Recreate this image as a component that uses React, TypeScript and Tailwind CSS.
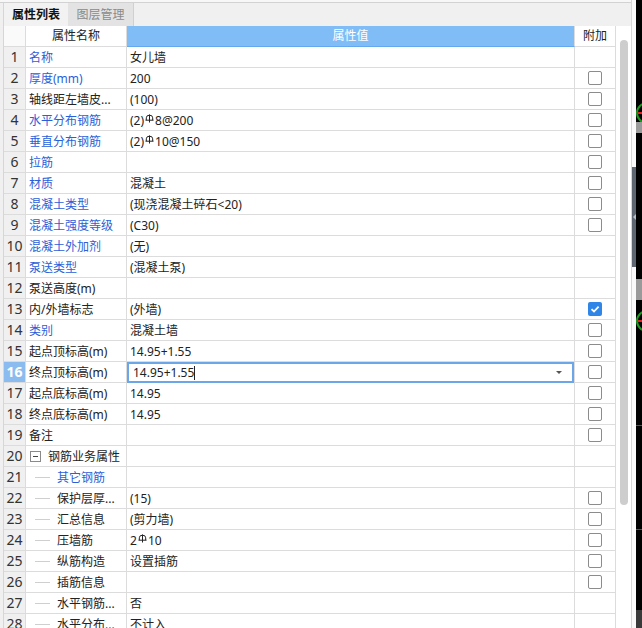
import React from "react";

type Check = "none" | "off" | "on";

type Row = {
  name: string;
  value?: React.ReactNode;
  blue?: boolean;
  check: Check;
  tree?: "group" | "child";
  editing?: boolean;
};

// HRB400 rebar mark, drawn as a small raised glyph
function Rebar() {
  return (
    <svg
      width="9"
      height="9"
      viewBox="0 0 9 9"
      className="inline-block relative -top-[3px] mx-px"
      fill="none"
      stroke="#222"
      strokeWidth="1"
    >
      <path d="M4.5 0.5V8.5" />
      <path d="M1.3 6.2V3.8Q1.3 1.2 4.5 1.2Q7.7 1.2 7.7 3.8V6.2" />
      <path d="M0.5 6.2H8.5" />
    </svg>
  );
}

const rows: Row[] = [
  { name: "名称", blue: true, value: "女儿墙", check: "none" },
  { name: "厚度(mm)", blue: true, value: "200", check: "off" },
  { name: "轴线距左墙皮...", value: "(100)", check: "off" },
  { name: "水平分布钢筋", blue: true, value: <>(2)<Rebar />8@200</>, check: "off" },
  { name: "垂直分布钢筋", blue: true, value: <>(2)<Rebar />10@150</>, check: "off" },
  { name: "拉筋", blue: true, check: "off" },
  { name: "材质", blue: true, value: "混凝土", check: "off" },
  { name: "混凝土类型", blue: true, value: "(现浇混凝土碎石<20)", check: "off" },
  { name: "混凝土强度等级", blue: true, value: "(C30)", check: "off" },
  { name: "混凝土外加剂", blue: true, value: "(无)", check: "none" },
  { name: "泵送类型", blue: true, value: "(混凝土泵)", check: "none" },
  { name: "泵送高度(m)", check: "none" },
  { name: "内/外墙标志", value: "(外墙)", check: "on" },
  { name: "类别", blue: true, value: "混凝土墙", check: "off" },
  { name: "起点顶标高(m)", value: "14.95+1.55", check: "off" },
  { name: "终点顶标高(m)", value: "14.95+1.55", check: "off", editing: true },
  { name: "起点底标高(m)", value: "14.95", check: "off" },
  { name: "终点底标高(m)", value: "14.95", check: "off" },
  { name: "备注", check: "off" },
  { name: "钢筋业务属性", check: "none", tree: "group" },
  { name: "其它钢筋", blue: true, check: "none", tree: "child" },
  { name: "保护层厚...", value: "(15)", check: "off", tree: "child" },
  { name: "汇总信息", value: "(剪力墙)", check: "off", tree: "child" },
  { name: "压墙筋", value: <>2<Rebar />10</>, check: "off", tree: "child" },
  { name: "纵筋构造", value: "设置插筋", check: "off", tree: "child" },
  { name: "插筋信息", check: "off", tree: "child" },
  { name: "水平钢筋...", value: "否", check: "none", tree: "child" },
  { name: "水平分布...", value: "不计入", check: "none", tree: "child" },
];

function CheckBox({ state }: { state: Check }) {
  if (state === "none") return null;
  if (state === "on")
    return (
      <span className="w-[14px] h-[14px] rounded-[2px] bg-[#2f86e6] flex items-center justify-center">
        <svg width="10" height="10" viewBox="0 0 10 10" fill="none" stroke="#fff" strokeWidth="1.8">
          <path d="M1.5 5.2L4 7.5L8.6 2.6" />
        </svg>
      </span>
    );
  return <span className="w-[14px] h-[14px] rounded-[2px] border border-[#8c8c8c] bg-white" />;
}

function NameCell({ row }: { row: Row }) {
  const color = row.blue ? "text-[#2b5fd8]" : "text-[#222]";
  if (row.tree === "group")
    return (
      <div className="flex items-center pl-[4px]">
        <span className="w-[11px] h-[11px] border border-[#8a8a8a] bg-white flex items-center justify-center">
          <span className="w-[5px] h-px bg-[#444]" />
        </span>
        <span className="ml-[7px] text-[#222]">{row.name}</span>
      </div>
    );
  if (row.tree === "child")
    return (
      <div className="flex items-center pl-[9px]">
        <span className="w-[15px] h-px bg-[#cfcfcf]" />
        <span className={`ml-[7px] ${color}`}>{row.name}</span>
      </div>
    );
  return <span className={`pl-[3px] ${color}`}>{row.name}</span>;
}

function ValueCell({ row }: { row: Row }) {
  if (row.editing)
    return (
      <div className="h-full w-full border-2 border-[#6aa6e8] bg-white flex items-center pl-[4px] pr-[10px]">
        <span className="text-[#222]">{row.value}</span>
        <span className="w-px h-[14px] bg-[#222]" />
        <span className="ml-auto w-0 h-0 border-l-[3px] border-r-[3px] border-t-[3px] border-l-transparent border-r-transparent border-t-[#555]" />
      </div>
    );
  return <span className="pl-[3px] text-[#222] whitespace-nowrap">{row.value}</span>;
}

export default function App() {
  return (
    <div
      className="w-[642px] h-[628px] flex overflow-hidden bg-[#f0f0f0] text-[12px] leading-none"
      style={{ fontFamily: '"Noto Sans", "Noto Sans CJK SC", sans-serif' }}
    >
      {/* property panel */}
      <div className="w-[632px] flex flex-col border-r border-[#d6d6d6]">
        <div className="h-[26px] flex flex-col shrink-0">
          <div className="h-[2px] bg-[#f7f7f7]" />
          <div className="h-px bg-[#d2d2d2]" />
          <div className="flex-1 flex pl-[3px]">
            <div className="w-[65px] border-l border-[#d6d6d6] bg-[#f2f2f2] flex items-center justify-center font-bold text-[#111]">
              属性列表
            </div>
            <div className="w-[66px] border-r border-[#d0d0d0] bg-[#e3e3e3] flex items-center justify-center text-[#8a8a8a]">
              图层管理
            </div>
          </div>
        </div>

        <div className="flex-1 flex min-h-0 bg-white">
          <div className="pl-[3px] bg-[#f0f0f0] flex">
            <div className="border-l border-[#d6d6d6] flex flex-col">
              {/* header */}
              <div className="h-[21px] flex shrink-0">
                <div className="w-[22px] border-r border-b border-[#dcdcdc] bg-[#fafafa]" />
                <div className="w-[101px] border-r border-b border-[#dcdcdc] bg-white flex items-center justify-center text-[#222]">
                  属性名称
                </div>
                <div className="w-[448px] border-r border-b border-[#dcdcdc] border-b-[#64a8f0] bg-[#80bcf6] flex items-center justify-center text-white">
                  属性值
                </div>
                <div className="w-[41px] border-r border-b border-[#dcdcdc] bg-white flex items-center justify-center text-[#222]">
                  附加
                </div>
              </div>

              {rows.map((row, i) => (
                <div key={i} className="h-[21px] flex shrink-0">
                  <div
                    className={`w-[22px] border-r border-b border-[#dcdcdc] flex items-center justify-center text-[14px] ${
                      row.editing ? "bg-[#8bbcf0] text-white font-bold" : "bg-[#f0f0f0] text-[#333]"
                    }`}
                  >
                    {i + 1}
                  </div>
                  <div className="w-[101px] border-r border-b border-[#dcdcdc] bg-white flex items-center whitespace-nowrap overflow-hidden pt-px">
                    <NameCell row={row} />
                  </div>
                  <div
                    className={`w-[448px] border-r border-[#dcdcdc] bg-white flex items-center ${
                      row.editing ? "" : "border-b pt-px"
                    }`}
                  >
                    <ValueCell row={row} />
                  </div>
                  <div className="w-[41px] border-r border-b border-[#dcdcdc] bg-white flex items-center justify-center">
                    <CheckBox state={row.check} />
                  </div>
                </div>
              ))}
            </div>
          </div>

          {/* vertical scroll bar */}
          <div className="w-[15px] bg-white pt-[14px] pl-[4px]">
            <div className="w-[8px] h-[465px] rounded-full bg-[#cdcdcd]" />
          </div>
        </div>
      </div>

      {/* splitter */}
      <div className="w-[4px] flex flex-col bg-[#fafafa]">
        <div className="h-[167px]" />
        <div className="h-[100px] bg-[#5d6671] flex items-center justify-center">
          <svg width="3" height="6" viewBox="0 0 3 6">
            <path d="M3 0L0 3L3 6Z" fill="#b8bec6" />
          </svg>
        </div>
      </div>

      {/* drawing canvas edge */}
      <div className="w-[6px] bg-black relative overflow-hidden">
        <div className="absolute left-0 top-[102px] w-[22px] h-[22px] rounded-full border-2 border-[#1c9a1c]" />
        <div className="absolute left-[1px] top-[112px] w-[6px] h-[2px] bg-[#e02020]" />
        <div className="absolute left-0 top-[122px] w-full h-[11px] bg-[#9a9a9a]" />
        <div className="absolute left-0 top-[279px] w-full h-[21px] bg-[#9a9a9a]" />
        <div className="absolute left-0 top-[310px] w-[22px] h-[22px] rounded-full border-2 border-[#1c9a1c]" />
        <div className="absolute left-[1px] top-[320px] w-[6px] h-[2px] bg-[#e02020]" />
        <div className="absolute left-0 top-[425px] w-full h-px bg-[#1a7a1a]" />
        <div className="absolute left-0 top-[529px] w-full h-px bg-[#1a7a1a]" />
        <div className="absolute left-0 top-[610px] w-full h-[18px] bg-[#3a3a3a]" />
      </div>
    </div>
  );
}
